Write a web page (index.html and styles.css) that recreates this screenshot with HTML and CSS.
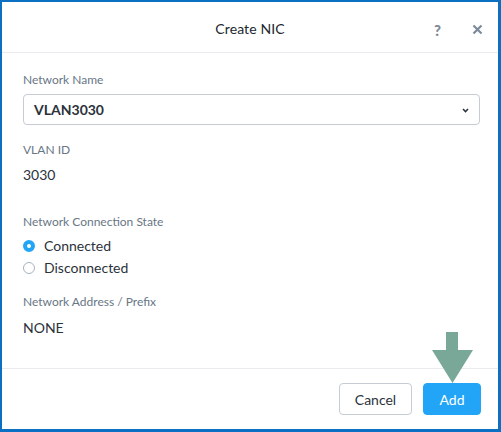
FILE: index.html
```html
<!DOCTYPE html>
<html>
<head>
<meta charset="utf-8">
<link rel="stylesheet" href="styles.css">
</head>
<body>
<div class="modal">
  <div class="header">
    <div class="title">Create NIC</div>
    <span class="help">?</span>
    <span class="close">
      <svg width="11" height="11" viewBox="0 0 11 11"><path d="M1.5 1.5 L9.5 9.5 M9.5 1.5 L1.5 9.5" stroke="#7d8a99" stroke-width="2.2" stroke-linecap="butt"/></svg>
    </span>
  </div>
  <div class="body">
    <div class="label">Network Name</div>
    <div class="select">
      <span class="select-value">VLAN3030</span>
      <svg class="chev" width="7" height="5" viewBox="0 0 7 5"><path d="M1 1 L3.5 3.5 L6 1" fill="none" stroke="#2b3440" stroke-width="1.6"/></svg>
    </div>
    <div class="label gap">VLAN ID</div>
    <div class="value">3030</div>
    <div class="label gap2">Network Connection State</div>
    <div class="radios">
      <div class="radio"><span class="dot on"></span>Connected</div>
      <div class="radio"><span class="dot"></span>Disconnected</div>
    </div>
    <div class="label gap3">Network Address / Prefix</div>
    <div class="value last">NONE</div>
  </div>
  <div class="footer">
    <button class="btn cancel">Cancel</button>
    <button class="btn add">Add</button>
  </div>
  <svg class="arrow" width="43" height="52" viewBox="0 0 43 52"><path d="M15 0 H27 V18 H42 L21.5 51 L1 18 H15 Z" fill="#79a898"/></svg>
</div>
</body>
</html>
```
FILE: styles.css
```css
* { box-sizing: border-box; }
html, body { margin: 0; padding: 0; }
body {
  font-family: Lato, "Open Sans", sans-serif;
  background: #fff;
}
.modal {
  position: relative;
  width: 501px;
  height: 432px;
  border-style: solid;
  border-color: #0b70c2;
  border-width: 2px 3px 3px 2px;
  display: flex;
  flex-direction: column;
  background: #fff;
}
.header {
  height: 51px;
  border-bottom: 1px solid #e9ebee;
  display: flex;
  align-items: center;
  justify-content: center;
  position: relative;
  padding-top: 3px;
}
.title {
  font-size: 14px;
  color: #22272e;
  letter-spacing: 0.1px;
}
.help {
  position: absolute;
  left: 432px;
  top: 19px;
  font-size: 15px;
  font-weight: 900;
  color: #7d8a99;
}
.close {
  position: absolute;
  left: 470px;
  top: 22px;
  line-height: 0;
}
.body {
  flex: 1;
  padding: 19px 18px 0 21px;
}
.label {
  font-size: 12px;
  line-height: 15px;
  color: #687686;
}
.select {
  margin-top: 7px;
  height: 31px;
  border: 1px solid #c6ccd3;
  border-radius: 4px;
  display: flex;
  align-items: center;
  justify-content: space-between;
  padding: 0 10px 0 10px;
}
.select-value {
  font-size: 14px;
  font-weight: 700;
  color: #2b323b;
}
.chev { margin-top: 1px; }
.gap { margin-top: 17px; }
.gap2 { margin-top: 31px; }
.gap3 { margin-top: 18px; }
.value {
  margin-top: 9px;
  font-size: 14px;
  line-height: 17px;
  color: #2b323b;
}
.value.last { margin-top: 10px; }
.radios {
  margin-top: 8px;
  display: flex;
  flex-direction: column;
  gap: 5px;
}
.radio {
  display: flex;
  align-items: center;
  font-size: 14px;
  line-height: 17px;
  color: #2b323b;
}
.dot {
  width: 12px;
  height: 12px;
  border-radius: 50%;
  border: 1px solid #a9b2bc;
  margin-right: 9px;
  display: inline-block;
  box-sizing: border-box;
}
.dot.on {
  border: 4px solid #22a5f7;
  background: #fff;
}
.footer {
  height: 61px;
  border-top: 1px solid #e9ebee;
  display: flex;
  justify-content: flex-end;
  align-items: flex-start;
  gap: 11px;
  padding: 14px 17px 0 0;
}
.btn {
  height: 32px;
  border-radius: 4px;
  font-family: inherit;
  font-size: 14px;
  cursor: pointer;
}
.cancel {
  width: 73px;
  background: #fff;
  border: 1px solid #c6ccd3;
  color: #2b323b;
}
.add {
  width: 58px;
  background: #22a5f7;
  border: 1px solid #22a5f7;
  color: #fff;
}
.arrow {
  position: absolute;
  left: 429px;
  top: 330px;
}
```
